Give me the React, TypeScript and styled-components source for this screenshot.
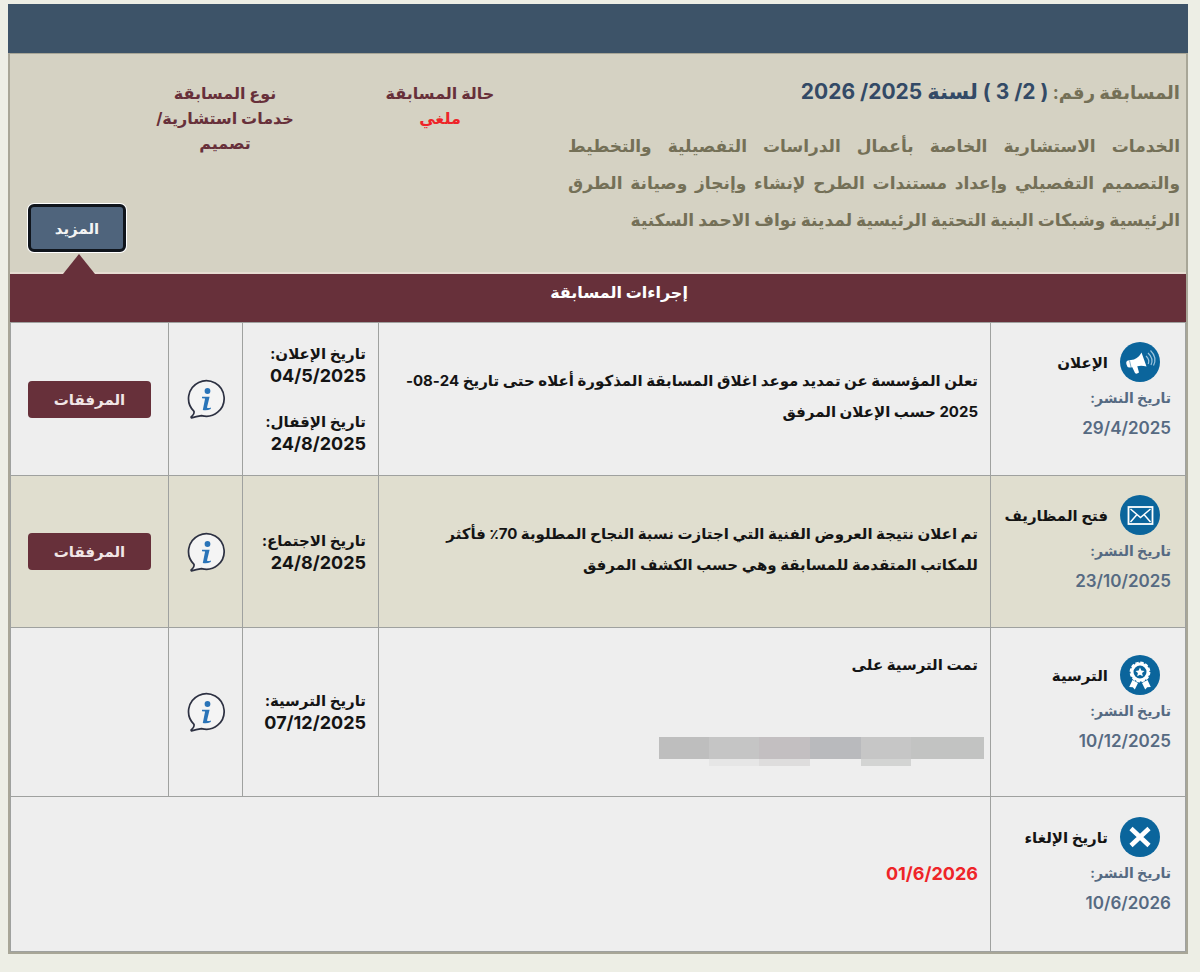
import React from "react";
import styled, { createGlobalStyle } from "styled-components";

const GlobalStyle = createGlobalStyle`
  * { box-sizing: border-box; }
  html { background: #edeee5; }
  body {
    margin: 0;
    font-family: Inter, "DejaVu Sans", sans-serif;
    font-size: 15px;
    font-weight: 700;
    color: #141414;
  }
`;

const Page = styled.main`
  padding: 4px 12px 20px 8px;
`;

const TopBar = styled.div`
  height: 49px;
  background: #3d5368;
`;

const Card = styled.section`
  border: 2px solid #a8a697;
  border-top-width: 1px;
`;

const Summary = styled.header`
  position: relative;
  display: grid;
  grid-template-columns: minmax(0, 612fr) minmax(0, 256fr) minmax(0, 174fr) minmax(0, 128fr);
  min-height: 220px;
  padding: 20px 6px 0 0;
  background: #d5d2c3;
  border-bottom: 2px solid #e6dcd2;
`;

const Heading = styled.h1`
  margin: 0;
  font-size: 18px;
  line-height: 36px;
  color: #747057;
`;

const Reference = styled.span`
  font-size: 21px;
  color: #334a66;
`;

const Description = styled.p`
  margin: 17px 0 0;
  font-size: 17px;
  line-height: 37px;
  text-align: justify;
  color: #747057;
`;

const Fact = styled.dl`
  margin: 7px 0 0;
  font-size: 16px;
  line-height: 25px;
  text-align: center;
  color: #67303a;
`;

const FactLabel = styled.dt``;

const FactValue = styled.dd<{ $alert?: boolean }>`
  margin: 0;
  color: ${({ $alert }) => ($alert ? "#ee2428" : "inherit")};
`;

const MoreButton = styled.button`
  position: absolute;
  left: 18px;
  bottom: 20px;
  width: 98px;
  height: 48px;
  padding: 0;
  border: 3px solid #10151c;
  border-radius: 6px;
  box-shadow: 0 0 0 1px #fff;
  background: #4f647c;
  color: #f4f4f4;
  font: inherit;
`;

const Pointer = styled.span`
  position: absolute;
  left: 53px;
  bottom: -2px;
  border: 16px solid transparent;
  border-top-width: 0;
  border-bottom: 20px solid #67303a;
`;

const SectionTitle = styled.h2`
  margin: 0;
  height: 48px;
  padding-left: 42px;
  background: #67303a;
  color: #fff;
  font-size: 16px;
  line-height: 36px;
  text-align: center;
`;

const Steps = styled.table`
  width: 100%;
  table-layout: fixed;
  border-collapse: collapse;
  background: #eeeeee;
`;

const Col = styled.col<{ $width?: string }>`
  width: ${({ $width }) => $width ?? "auto"};
`;

const Row = styled.tr<{ $height: number; $tinted?: boolean }>`
  height: ${({ $height }) => $height}px;
  background: ${({ $tinted }) => ($tinted ? "#e0decf" : "transparent")};
`;

const Cell = styled.td<{ $top?: number }>`
  padding: ${({ $top }) => $top ?? 0}px 12px 0;
  vertical-align: ${({ $top }) => ($top === undefined ? "middle" : "top")};
  border: 1px solid #9fa19f;
  line-height: 31px;
`;

const StepCell = styled.th<{ $top: number }>`
  padding: ${({ $top }) => $top}px 14px 0 12px;
  vertical-align: top;
  text-align: start;
  border: 1px solid #9fa19f;
`;

const StepName = styled.div`
  display: flex;
  align-items: center;
  gap: 12px;
  padding-right: 11px;
  white-space: nowrap;

  svg { flex: none; }
`;

const Published = styled.div`
  font-size: 14px;
  line-height: 31px;
  color: #566a82;

  time { display: block; font-size: 17px; font-weight: 600; }
`;

const DateBlock = styled.div`
  line-height: 22px;
  white-space: nowrap;

  & + & { margin-top: 24px; }

  time { display: block; font-size: 18px; }
`;

const CenterCell = styled(Cell)`
  padding: 0;
  text-align: center;

  svg { display: block; margin: 0 auto; }
`;

const AttachmentsButton = styled.button`
  display: block;
  width: 123px;
  height: 37px;
  margin: 0 auto;
  padding: 0;
  border: 0;
  border-radius: 4px;
  background: #67303a;
  color: #f1e6e6;
  font: inherit;
`;

const CancelDate = styled.time`
  color: #ee2428;
  font-size: 18px;
`;

const Redacted = styled.div`
  margin: 57px -6px 0 0;
`;

const Disc = ({ children }: { children: React.ReactNode }) => (
  <svg width="40" height="40" viewBox="0 0 40 40" aria-hidden="true">
    <circle cx="20" cy="20" r="20" fill="#0b659c" />
    {children}
  </svg>
);

const Megaphone = () => (
  <Disc>
    <path d="M6.500 22.500Q5.500 19.500 8 18.600L14 17.400Q19 15.500 21.500 10.500L26.500 24.500Q21 23 17.300 24.300L19 30.500Q16.500 32.500 15 31L12.300 25.300 9 25.600Q7 25 6.500 22.500Z" fill="#fff" />
    <path d="M26 14q4 3.600 2.200 8M28 11q6 5.500 3 12M30.500 8.500q7 7 3 15" fill="none" stroke="#9cc4dd" strokeWidth="1.200" />
    <path d="M9.500 18.500 11 25" stroke="#7eaeca" strokeWidth="1" />
  </Disc>
);

const Envelope = () => (
  <Disc>
    <g fill="none" stroke="#fff" strokeWidth="1.800">
      <rect x="8.500" y="12" width="24" height="17" />
      <path d="M10.500 14l10 8.500 10-8.500M10.500 27l6.500-7.500M30.500 27 24 19.500" strokeWidth="1.500" />
    </g>
  </Disc>
);

const Award = () => (
  <Disc>
    <path d="M12.500 25 18 28 14.800 34.500 12.800 32.200 9.200 32ZM27.500 25 22 28 25.200 34.500 27.200 32.200 30.800 32Z" fill="#fff" />
    <circle cx="20" cy="17" r="8" fill="#0b659c" stroke="#fff" strokeWidth="3" />
    <circle cx="20" cy="17" r="9.600" fill="none" stroke="#fff" strokeWidth="1.600" strokeDasharray="3.400 1.625" />
    <path d="m20 12.500 1.300 3 3.200.4-2.400 2.200.7 3.200-2.800-1.600-2.800 1.600.7-3.200-2.400-2.200 3.200-.4Z" fill="#fff" />
  </Disc>
);

const Cross = () => (
  <Disc>
    <path d="m11 11.500 18 17m0-17-18 17" stroke="#fff" strokeWidth="4.600" />
  </Disc>
);

const InfoBubble = () => (
  <svg width="38" height="40" viewBox="0 0 38 40" role="img" aria-label="معلومات">
    <path
      d="M7 32.300A17.800 17.800 0 1 1 14.500 36.600Q9 37.600 4.500 38.900 3.400 38 5.500 36.600 7.400 35 7 32.300Z"
      fill="#f4f4f4"
      stroke="#2d3142"
      strokeWidth="1.700"
      strokeLinejoin="round"
    />
    <circle cx="20.500" cy="12" r="2.900" fill="#2a74b8" />
    <path d="M15 17.800h7.600l-2.600 10.600q1 1 3.800 0v1.600q-3.800 1.800-8 1l2.300-11.500-3.100-.3Z" fill="#2a74b8" />
  </svg>
);

const MaskedName = () => (
  <svg width="325" height="30" viewBox="0 0 325 30" role="img" aria-label="محجوب">
    <path d="M0 0h50v22H0Z" fill="#bebebe" />
    <path d="M50 0h50v22H50Z" fill="#c5c5c5" />
    <path d="M100 0h51v22h-51Z" fill="#c3bfc1" />
    <path d="M151 0h51v22h-51Z" fill="#b9babd" />
    <path d="M202 0h50v22h-50Z" fill="#c6c6c6" />
    <path d="M252 0h73v22h-73Z" fill="#c2c3c2" />
    <path d="M50 22h50v7H50Z" fill="#e6e6e6" />
    <path d="M100 22h51v7h-51Z" fill="#dedddd" />
    <path d="M202 22h50v7h-50Z" fill="#d3d4d3" />
  </svg>
);

type StepProps = { icon: React.ReactNode; name: string; date: string; top: number };

const Step = ({ icon, name, date, top }: StepProps) => (
  <StepCell scope="row" $top={top}>
    <StepName>
      {icon}
      <span>{name}</span>
    </StepName>
    <Published>
      تاريخ النشر:
      <time>{date}</time>
    </Published>
  </StepCell>
);

const LabelledDate = ({ label, date }: { label: string; date: string }) => (
  <DateBlock>
    {label}
    <time>{date}</time>
  </DateBlock>
);

export default function App() {
  return (
    <Page dir="rtl" lang="ar">
      <GlobalStyle />
      <TopBar />
      <Card>
        <Summary>
          <div>
            <Heading>
              المسابقة رقم: <Reference>( 2/ 3 ) لسنة 2025/ 2026</Reference>
            </Heading>
            <Description>
              الخدمات الاستشارية الخاصة بأعمال الدراسات التفصيلية والتخطيط والتصميم التفصيلي وإعداد
              مستندات الطرح لإنشاء وإنجاز وصيانة الطرق الرئيسية وشبكات البنية التحتية الرئيسية لمدينة
              نواف الاحمد السكنية
            </Description>
          </div>
          <Fact>
            <FactLabel>حالة المسابقة</FactLabel>
            <FactValue $alert>ملغي</FactValue>
          </Fact>
          <Fact>
            <FactLabel>نوع المسابقة</FactLabel>
            <FactValue>خدمات استشارية/ تصميم</FactValue>
          </Fact>
          <MoreButton type="button">المزيد</MoreButton>
          <Pointer />
        </Summary>
        <SectionTitle>إجراءات المسابقة</SectionTitle>
        <Steps>
          <colgroup>
            <Col $width="195px" />
            <Col />
            <Col $width="136px" />
            <Col $width="74px" />
            <Col $width="158px" />
          </colgroup>
          <tbody>
            <Row $height={153}>
              <Step icon={<Megaphone />} name="الإعلان" date="29/4/2025" top={19} />
              <Cell $top={42}>
                تعلن المؤسسة عن تمديد موعد اغلاق المسابقة المذكورة أعلاه حتى تاريخ 24-08-2025 حسب
                الإعلان المرفق
              </Cell>
              <Cell>
                <LabelledDate label="تاريخ الإعلان:" date="04/5/2025" />
                <LabelledDate label="تاريخ الإقفال:" date="24/8/2025" />
              </Cell>
              <CenterCell><InfoBubble /></CenterCell>
              <CenterCell><AttachmentsButton type="button">المرفقات</AttachmentsButton></CenterCell>
            </Row>
            <Row $height={152} $tinted>
              <Step icon={<Envelope />} name="فتح المظاريف" date="23/10/2025" top={19} />
              <Cell $top={42}>
                تم اعلان نتيجة العروض الفنية التي اجتازت نسبة النجاح المطلوبة 70٪ فأكثر للمكاتب
                المتقدمة للمسابقة وهي حسب الكشف المرفق
              </Cell>
              <Cell>
                <LabelledDate label="تاريخ الاجتماع:" date="24/8/2025" />
              </Cell>
              <CenterCell><InfoBubble /></CenterCell>
              <CenterCell><AttachmentsButton type="button">المرفقات</AttachmentsButton></CenterCell>
            </Row>
            <Row $height={169}>
              <Step icon={<Award />} name="الترسية" date="10/12/2025" top={27} />
              <Cell $top={21}>
                تمت الترسية على
                <Redacted><MaskedName /></Redacted>
              </Cell>
              <Cell>
                <LabelledDate label="تاريخ الترسية:" date="07/12/2025" />
              </Cell>
              <CenterCell><InfoBubble /></CenterCell>
              <CenterCell />
            </Row>
            <Row $height={155}>
              <Step icon={<Cross />} name="تاريخ الإلغاء" date="10/6/2026" top={20} />
              <Cell colSpan={4}>
                <CancelDate>01/6/2026</CancelDate>
              </Cell>
            </Row>
          </tbody>
        </Steps>
      </Card>
    </Page>
  );
}
